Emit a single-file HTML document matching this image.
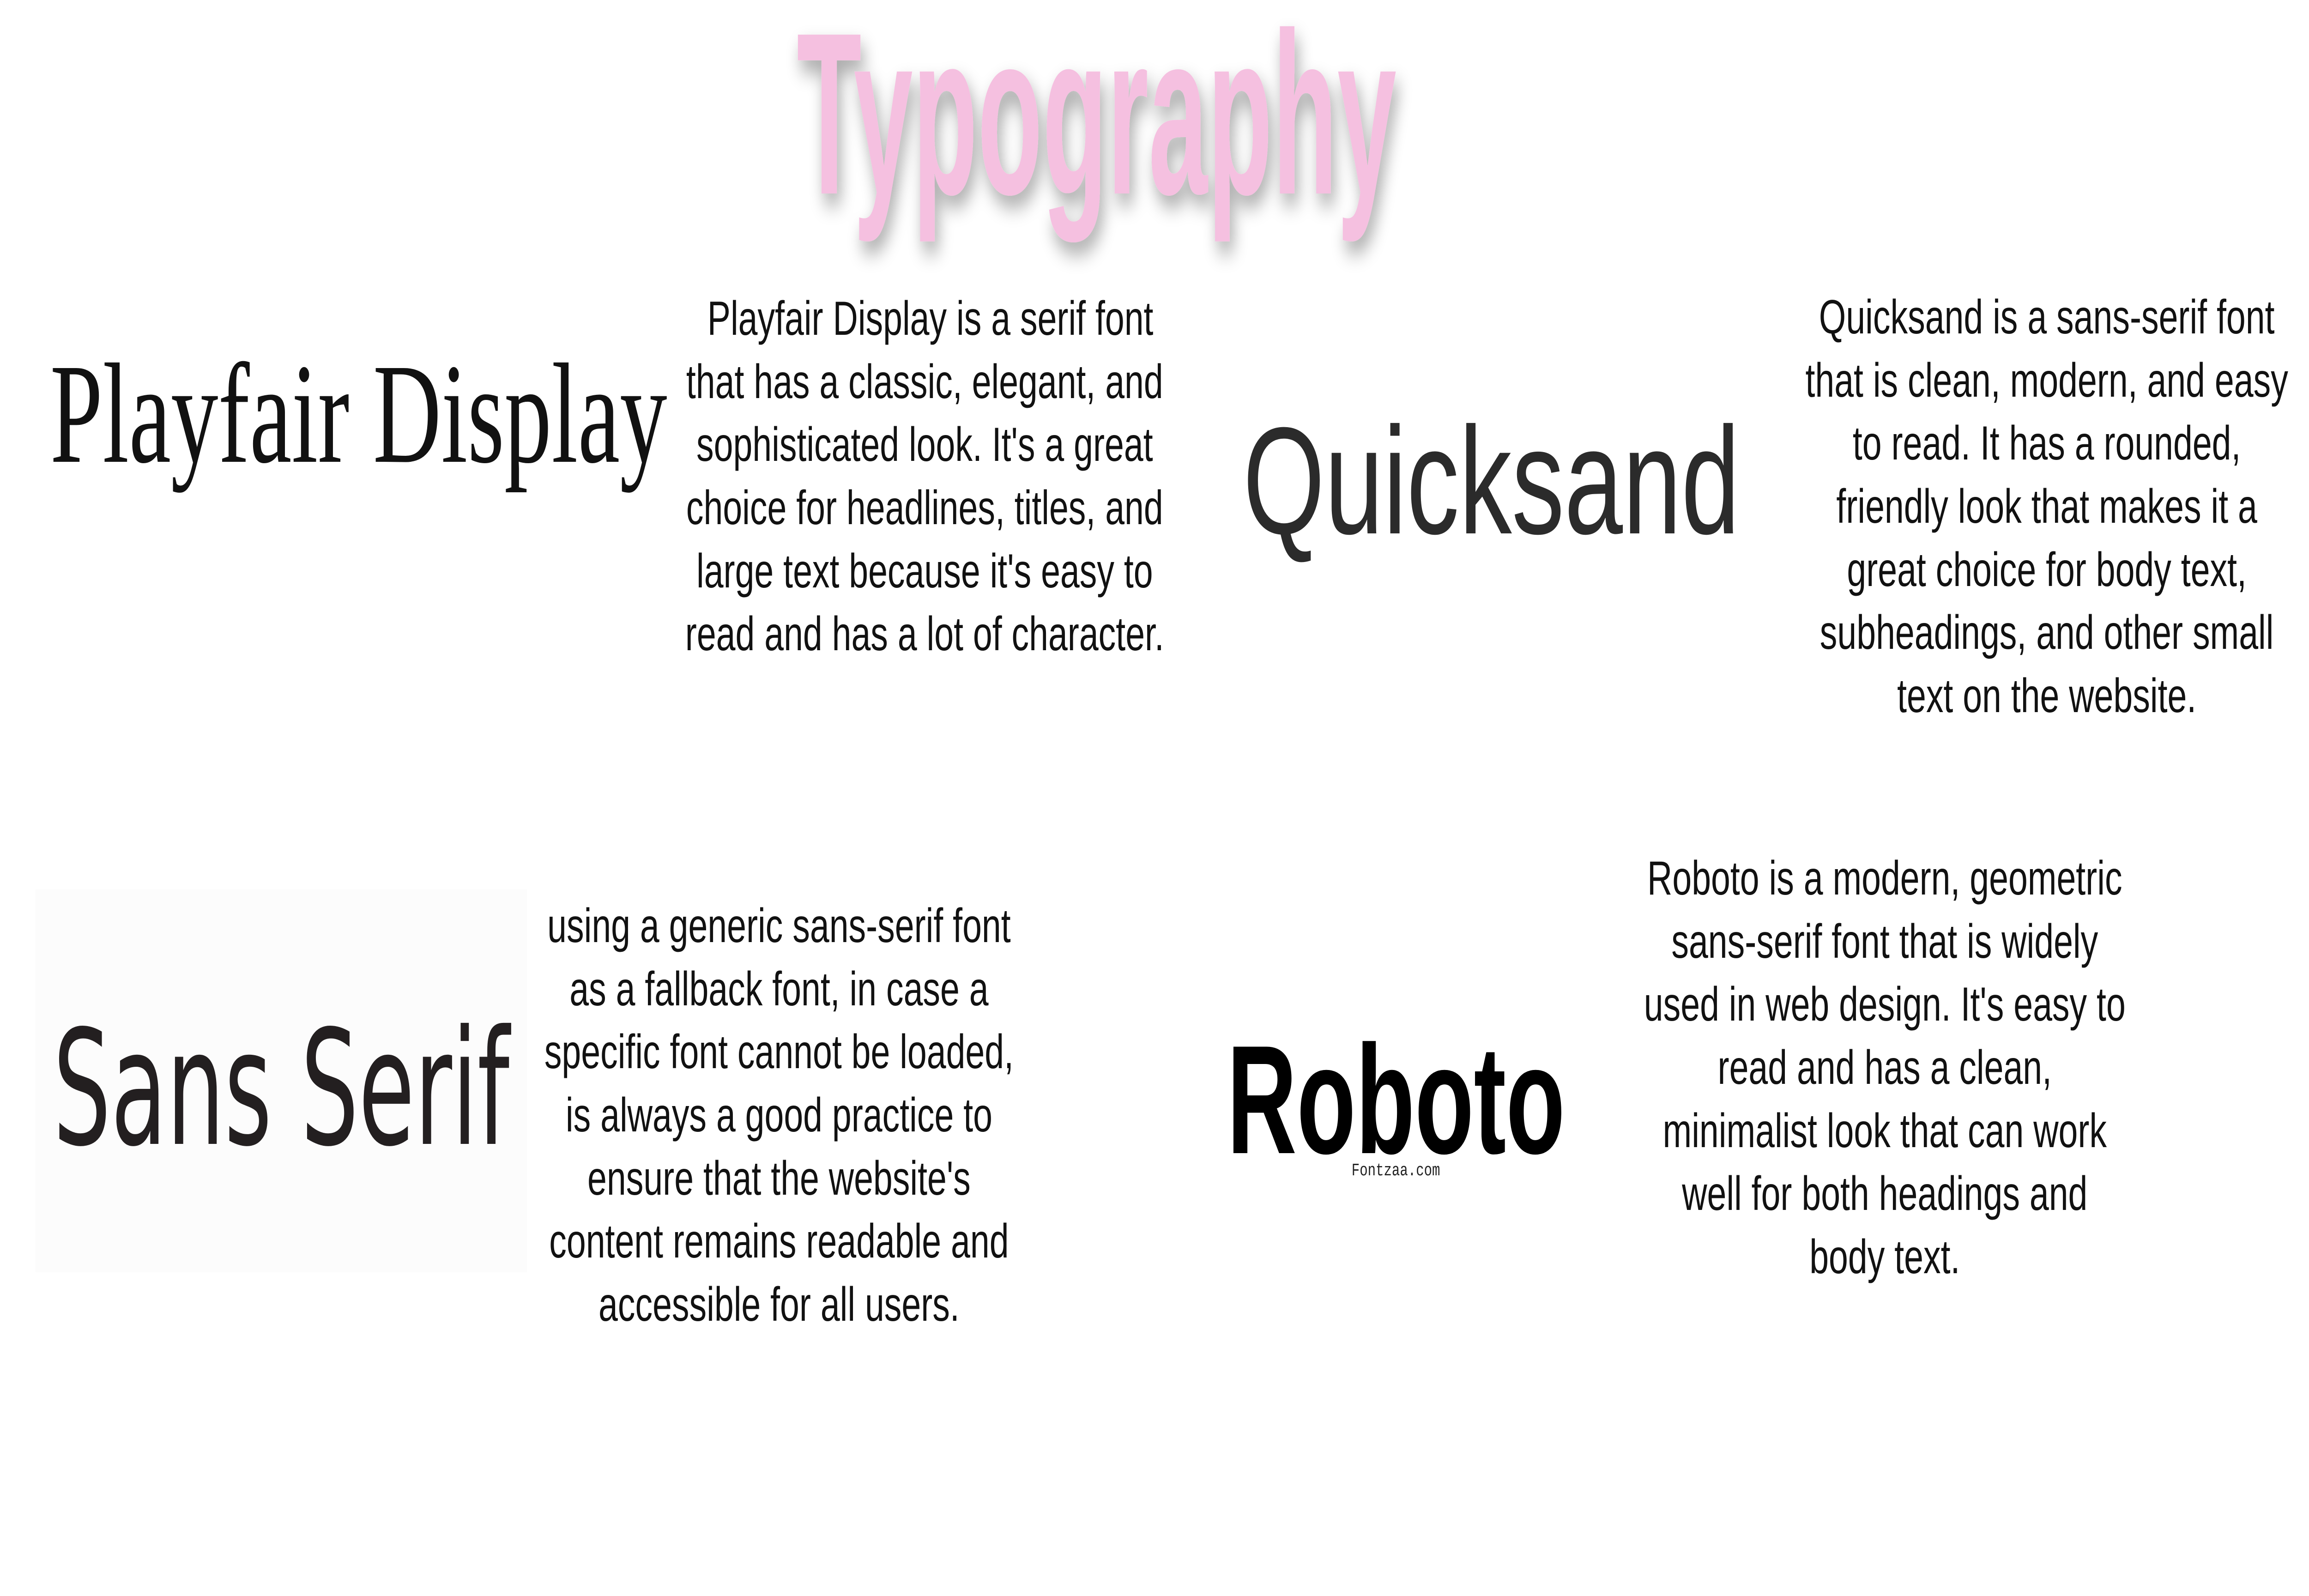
<!DOCTYPE html>
<html><head><meta charset="utf-8">
<style>
html,body{margin:0;padding:0;background:#fff;overflow:hidden;width:100vw;height:100vh;}
svg{display:block;width:100vw;height:100vh;}
.p{font-family:"Liberation Sans",sans-serif;font-size:104px;fill:#111;text-anchor:middle;}
</style></head>
<body>
<svg viewBox="0 0 6912 3456" preserveAspectRatio="none" xmlns="http://www.w3.org/2000/svg">
<defs>
<filter id="sh" x="-10%" y="-20%" width="120%" height="150%">
<feGaussianBlur in="SourceAlpha" stdDeviation="22"/>
<feOffset dx="10" dy="25" result="b"/>
<feComponentTransfer><feFuncA type="linear" slope="0.35"/></feComponentTransfer>
<feMerge><feMergeNode/><feMergeNode in="SourceGraphic"/></feMerge>
</filter>
</defs>
<rect width="6912" height="3456" fill="#fff"/>
<text x="2385" y="419" font-family="'Liberation Sans Narrow','Liberation Sans',sans-serif" font-weight="bold" font-size="500" fill="#f5c0e0" textLength="1795" lengthAdjust="spacingAndGlyphs" filter="url(#sh)">Typography</text>

<text x="150" y="1000" font-family="'Liberation Serif',serif" font-size="310" fill="#111" textLength="1847" lengthAdjust="spacingAndGlyphs">Playfair Display</text>

<g class="p">
<text x="2785" y="725">Playfair Display is a serif font</text>
<text x="2768" y="862">that has a classic, elegant, and</text>
<text x="2768" y="998">sophisticated look. It's a great</text>
<text x="2768" y="1135">choice for headlines, titles, and</text>
<text x="2768" y="1272">large text because it's easy to</text>
<text x="2768" y="1408">read and has a lot of character.</text>
</g>

<text x="3721" y="1155" font-family="'Liberation Sans',sans-serif" font-size="330" fill="#2b2b2b" textLength="1487" lengthAdjust="spacingAndGlyphs">Quicksand</text>

<g class="p">
<text x="6127" y="722">Quicksand is a sans-serif font</text>
<text x="6127" y="859">that is clean, modern, and easy</text>
<text x="6127" y="995">to read. It has a rounded,</text>
<text x="6127" y="1132">friendly look that makes it a</text>
<text x="6127" y="1269">great choice for body text,</text>
<text x="6127" y="1405">subheadings, and other small</text>
<text x="6127" y="1542">text on the website.</text>
</g>

<rect x="106" y="1926" width="1472" height="829" fill="#fcfcfc"/>
<text x="159" y="2477" font-family="'DejaVu Sans','Liberation Sans',sans-serif" font-size="345" fill="#231f20" textLength="1366" lengthAdjust="spacingAndGlyphs">Sans Serif</text>

<g class="p">
<text x="2332" y="2040">using a generic sans-serif font</text>
<text x="2332" y="2177">as a fallback font, in case a</text>
<text x="2332" y="2313">specific font cannot be loaded,</text>
<text x="2332" y="2450">is always a good practice to</text>
<text x="2332" y="2587">ensure that the website's</text>
<text x="2332" y="2723">content remains readable and</text>
<text x="2332" y="2860">accessible for all users.</text>
</g>

<text x="3673" y="2497" font-family="'Liberation Sans',sans-serif" font-weight="bold" font-size="335" fill="#000" textLength="1012" lengthAdjust="spacingAndGlyphs">Roboto</text>
<text x="4046" y="2545" font-family="'Liberation Mono',monospace" font-size="38" fill="#222" textLength="265" lengthAdjust="spacingAndGlyphs">Fontzaa.com</text>

<g class="p">
<text x="5642" y="1937">Roboto is a modern, geometric</text>
<text x="5642" y="2074">sans-serif font that is widely</text>
<text x="5642" y="2210">used in web design. It's easy to</text>
<text x="5642" y="2347">read and has a clean,</text>
<text x="5642" y="2484">minimalist look that can work</text>
<text x="5642" y="2620">well for both headings and</text>
<text x="5642" y="2757">body text.</text>
</g>
</svg>
</body></html>
